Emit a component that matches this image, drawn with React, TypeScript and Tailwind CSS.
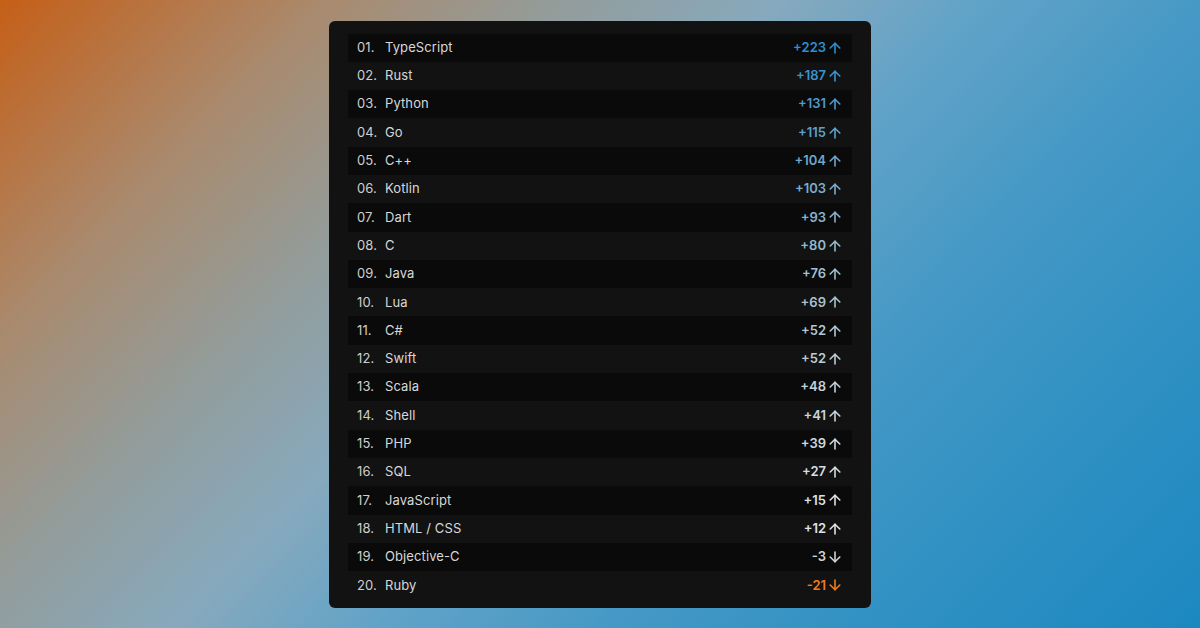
import React from "react";

type Row = { name: string; value: string; color: string; up: boolean };

const rows: Row[] = [
  { name: "TypeScript", value: "+223", color: "text-[#2b8fd0]", up: true },
  { name: "Rust", value: "+187", color: "text-[#3994cf]", up: true },
  { name: "Python", value: "+131", color: "text-[#4c9bcd]", up: true },
  { name: "Go", value: "+115", color: "text-[#5da1cc]", up: true },
  { name: "C++", value: "+104", color: "text-[#6ca7cc]", up: true },
  { name: "Kotlin", value: "+103", color: "text-[#7aadcc]", up: true },
  { name: "Dart", value: "+93", color: "text-[#88b3cd]", up: true },
  { name: "C", value: "+80", color: "text-[#95b9ce]", up: true },
  { name: "Java", value: "+76", color: "text-[#a1bfd0]", up: true },
  { name: "Lua", value: "+69", color: "text-[#aac3d1]", up: true },
  { name: "C#", value: "+52", color: "text-[#b3c7d3]", up: true },
  { name: "Swift", value: "+52", color: "text-[#bbccd6]", up: true },
  { name: "Scala", value: "+48", color: "text-[#c3d0d8]", up: true },
  { name: "Shell", value: "+41", color: "text-[#cad5db]", up: true },
  { name: "PHP", value: "+39", color: "text-[#d0d9de]", up: true },
  { name: "SQL", value: "+27", color: "text-[#d6dde1]", up: true },
  { name: "JavaScript", value: "+15", color: "text-[#dde1e4]", up: true },
  { name: "HTML / CSS", value: "+12", color: "text-[#e0e2e4]", up: true },
  { name: "Objective-C", value: "-3", color: "text-[#d2d2d2]", up: false },
  { name: "Ruby", value: "-21", color: "text-[#f07d1d]", up: false },
];

function Arrow({ up }: { up: boolean }) {
  return (
    <svg
      width="12"
      height="12"
      viewBox="0 0 12 12"
      fill="none"
      stroke="currentColor"
      strokeWidth="1.6"
      strokeLinecap="round"
      strokeLinejoin="round"
      className={up ? "" : "rotate-180"}
    >
      <path d="M6 11V1.2" />
      <path d="M1.2 6L6 1.2L10.8 6" />
    </svg>
  );
}

export default function App() {
  return (
    <div
      className="w-[1200px] h-[628px] flex items-center justify-center bg-[linear-gradient(134deg,#c55f17_0%,#a98a6e_18%,#939c9a_31%,#87a9bd_43%,#62a3c8_54%,#4498c5_68%,#2e90c3_84%,#1c88c0_100%)]"
      style={{ fontFamily: "Inter, 'Noto Sans', sans-serif" }}
    >
      <div className="w-[542px] h-[587px] bg-[#121212] rounded-[6px] pt-[13px] px-[19px] flex flex-col">
        {rows.map((r, i) => (
          <div
            key={r.name}
            className={`h-[28.3px] shrink-0 flex items-center pl-[9px] pr-[11px] text-[13px] tracking-[0.1px] ${
              i % 2 === 0 ? "bg-[#0a0a0a]" : "bg-[#121212]"
            }`}
          >
            <span className="w-[28px] text-[#cfcfcf]">
              {String(i + 1).padStart(2, "0")}.
            </span>
            <span className="text-[#d8d8d8]">{r.name}</span>
            <span
              className={`ml-auto flex items-center gap-[3px] font-semibold tracking-normal ${r.color}`}
            >
              <span>{r.value}</span>
              <Arrow up={r.up} />
            </span>
          </div>
        ))}
      </div>
    </div>
  );
}
